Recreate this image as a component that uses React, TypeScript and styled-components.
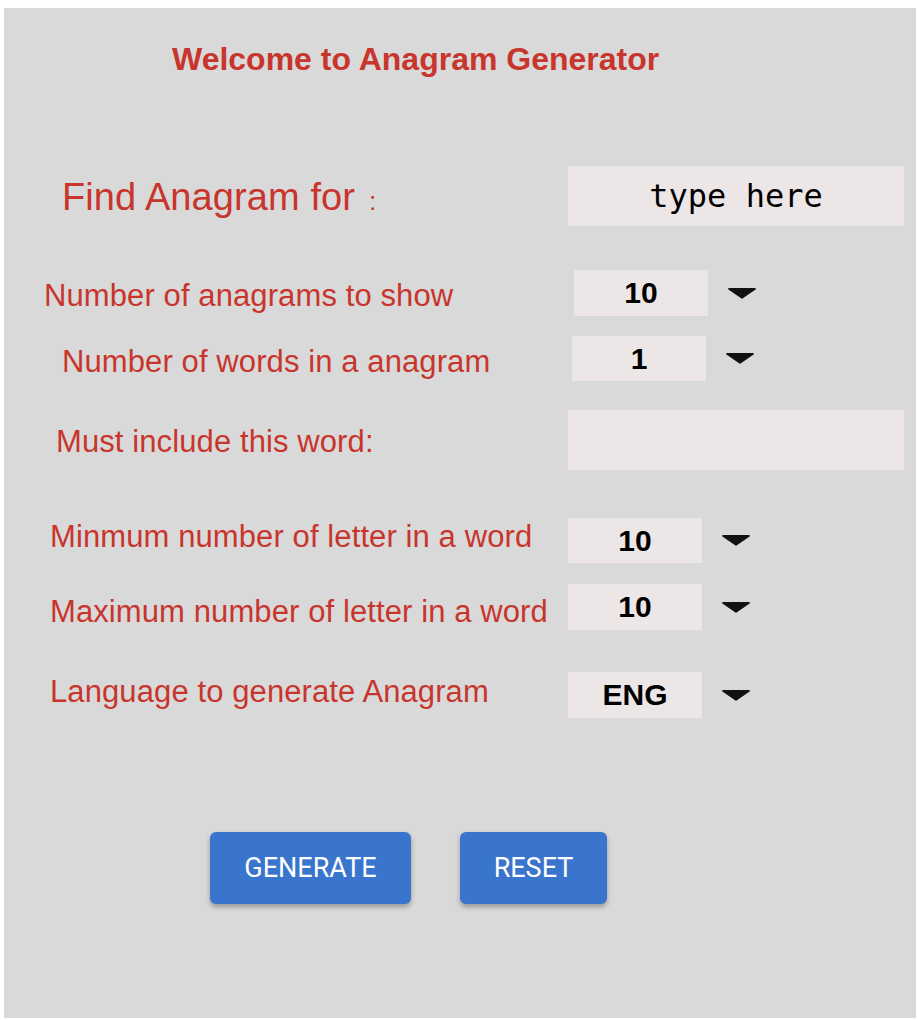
import React from "react";
import styled, { createGlobalStyle } from "styled-components";

const GlobalStyle = createGlobalStyle`
  html, body { margin: 0; padding: 0; background: #ffffff; }
  body { font-family: "Liberation Sans", Arial, sans-serif; }
`;

const RED = "#c8352c";

const Panel = styled.div`
  box-sizing: border-box;
  margin: 8px 0 0 4px;
  width: 912px;
  height: 1010px;
  background: #d9d9d9;
  padding-top: 35px;
  display: flex;
  flex-direction: column;
`;

const Title = styled.h1`
  margin: 0 0 91px 168px;
  font-family: "Liberation Sans", Arial, sans-serif;
  font-weight: 700;
  font-size: 32px;
  line-height: 32px;
  color: ${RED};
`;

const Row = styled.div<{ $h: number; $gap: number }>`
  display: grid;
  grid-template-columns: 564px auto;
  align-items: center;
  height: ${(p) => p.$h}px;
  margin-bottom: ${(p) => p.$gap}px;
`;

const Label = styled.div<{ $indent: number; $dy: number; $size?: number }>`
  padding-left: ${(p) => p.$indent}px;
  font-family: "Liberation Sans", Arial, sans-serif;
  font-size: ${(p) => p.$size ?? 31}px;
  letter-spacing: 0.1px;
  color: ${RED};
  white-space: nowrap;
  margin-top: ${(p) => (p.$dy > 0 ? p.$dy * 2 : 0)}px;
  margin-bottom: ${(p) => (p.$dy < 0 ? -p.$dy * 2 : 0)}px;
`;

const Colon = styled.span`
  font-size: 26px;
  margin-left: 14px;
`;

const TextBox = styled.div`
  box-sizing: border-box;
  width: 336px;
  height: 100%;
  background: #ece6e6;
  display: flex;
  align-items: center;
  justify-content: center;
  font-family: "DejaVu Sans Mono", "Liberation Mono", monospace;
  font-size: 32px;
  color: #000;
`;

const SelectWrap = styled.div<{ $shift: number }>`
  display: flex;
  align-items: center;
  gap: 19px;
  height: 100%;
  margin-left: ${(p) => p.$shift}px;
`;

const SelectBox = styled.div`
  width: 134px;
  height: 100%;
  background: #ece6e6;
  display: flex;
  align-items: center;
  justify-content: center;
  font-family: "Liberation Sans", Arial, sans-serif;
  font-weight: 700;
  font-size: 30px;
  color: #000;
`;

const Arrow = styled.svg`
  width: 30px;
  height: 11px;
  display: block;
`;

const Buttons = styled.div`
  display: flex;
  gap: 49px;
  margin-left: 206px;
`;

const Button = styled.button<{ $w: number }>`
  width: ${(p) => p.$w}px;
  height: 72px;
  border: none;
  border-radius: 6px;
  background: #3a75cd;
  color: #ffffff;
  font-family: Roboto, "Liberation Sans", sans-serif;
  font-size: 27px;
  font-weight: 400;
  box-shadow: 0 3px 5px rgba(0, 0, 0, 0.3);
  cursor: pointer;
`;

const DropArrow = () => (
  <Arrow viewBox="0 0 30 11">
    <path d="M1 1.2 Q1 0 2.5 0 L27.5 0 Q29 0 29 1.2 L15.5 10.6 Q15 11 14.5 10.6 Z" fill="#111" />
  </Arrow>
);

const Select = ({ value, shift = 0 }: { value: string; shift?: number }) => (
  <SelectWrap $shift={shift}>
    <SelectBox>{value}</SelectBox>
    <DropArrow />
  </SelectWrap>
);

export default function App() {
  return (
    <>
      <GlobalStyle />
      <Panel>
        <Title>Welcome to Anagram Generator</Title>

        <Row $h={60} $gap={44}>
          <Label $indent={58} $dy={1} $size={38}>
            Find Anagram for<Colon>:</Colon>
          </Label>
          <TextBox>type here</TextBox>
        </Row>

        <Row $h={46} $gap={20}>
          <Label $indent={40} $dy={3}>Number of anagrams to show</Label>
          <Select value="10" shift={6} />
        </Row>

        <Row $h={45} $gap={29}>
          <Label $indent={58} $dy={3}>Number of words in a anagram</Label>
          <Select value="1" shift={4} />
        </Row>

        <Row $h={60} $gap={48}>
          <Label $indent={52} $dy={2}>Must include this word:</Label>
          <TextBox />
        </Row>

        <Row $h={45} $gap={21}>
          <Label $indent={46} $dy={-4}>Minmum number of letter in a word</Label>
          <Select value="10" />
        </Row>

        <Row $h={46} $gap={42}>
          <Label $indent={46} $dy={5}>Maximum number of letter in a word</Label>
          <Select value="10" />
        </Row>

        <Row $h={46} $gap={114}>
          <Label $indent={46} $dy={-3}>Language to generate Anagram</Label>
          <Select value="ENG" />
        </Row>

        <Buttons>
          <Button $w={201}>GENERATE</Button>
          <Button $w={147}>RESET</Button>
        </Buttons>
      </Panel>
    </>
  );
}
